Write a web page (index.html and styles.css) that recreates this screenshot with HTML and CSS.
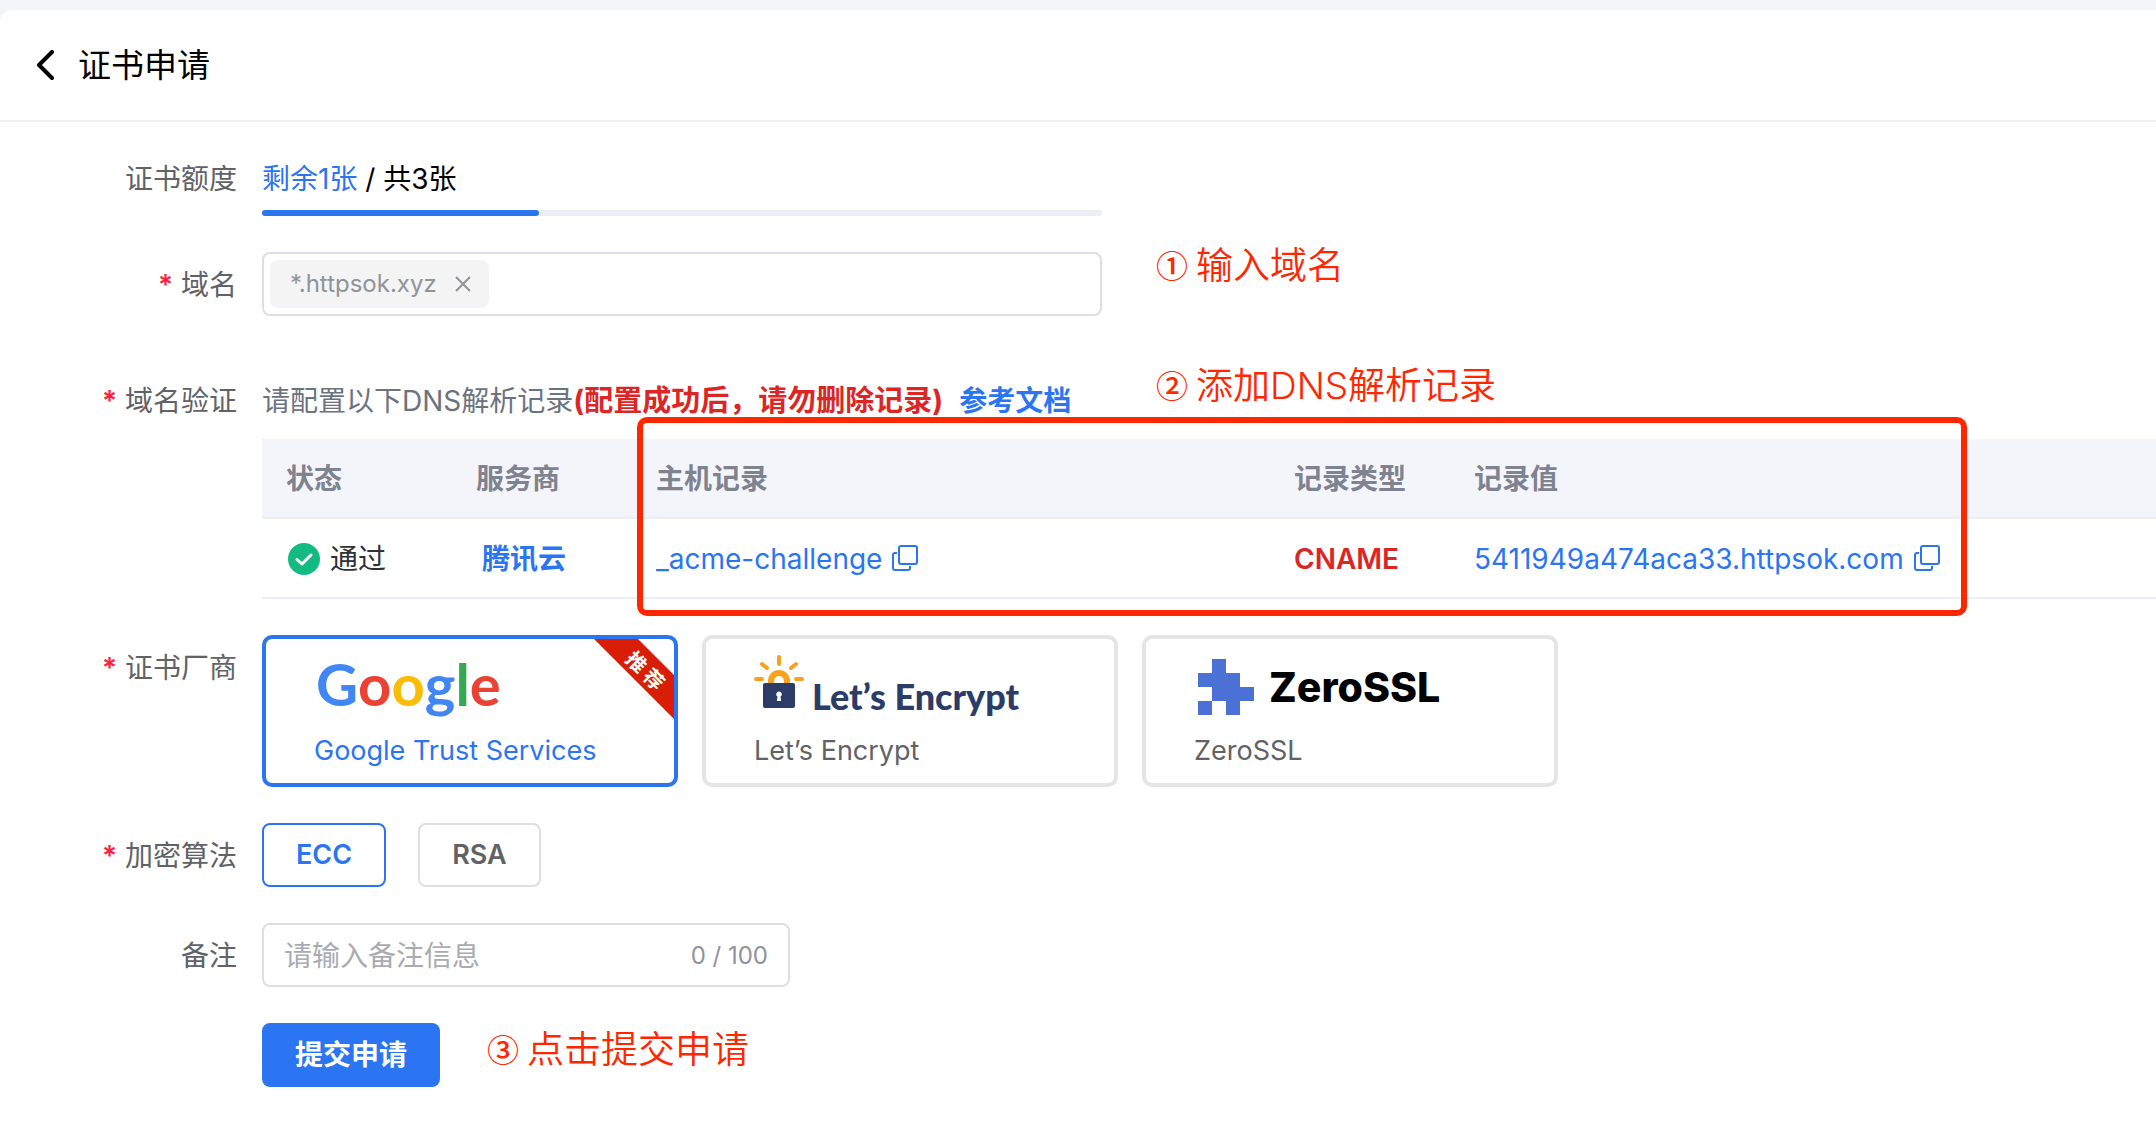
FILE: index.html
```html
<!DOCTYPE html>
<html lang="zh-CN">
<head>
<meta charset="utf-8">
<meta name="viewport" content="width=device-width, initial-scale=1">
<title>证书申请</title>
<link rel="stylesheet" href="styles.css">
</head>
<body>
<svg class="sprite" aria-hidden="true">
  <symbol id="copy" viewBox="0 0 26 28">
    <rect x="7" y="1" width="18" height="18" rx="2"/>
    <path d="M5 8H3a2 2 0 0 0-2 2v13a2 2 0 0 0 2 2h13a2 2 0 0 0 2-2v-2"/>
  </symbol>
</svg>
<main class="panel">
  <header class="page-head">
    <button class="back" type="button" aria-label="返回">
      <svg width="18" height="30" viewBox="0 0 18 30"><path d="M16 2 3 15l13 13"/></svg>
    </button>
    <h1>证书申请</h1>
  </header>

  <form class="form">
    <div class="row">
      <span class="label">证书额度</span>
      <div class="field medium">
        <p class="quota"><span class="primary">剩余1张</span> / 共3张</p>
        <div class="bar"><div class="bar-fill" style="width:33%"></div></div>
      </div>
    </div>

    <div class="row">
      <label class="label required" for="domain">域名</label>
      <div class="field medium box">
        <span class="tag">*.httpsok.xyz
          <button type="button" aria-label="移除"><svg width="16" height="16" viewBox="0 0 16 16"><path d="M1 1l14 14M15 1 1 15"/></svg></button>
        </span>
        <input id="domain" type="text">
      </div>
      <p class="note note-domain"><span>①</span>输入域名</p>
    </div>

    <div class="row row-dns">
      <span class="label required">域名验证</span>
      <div class="field">
        <p class="hint">请配置以下DNS解析记录<strong>(配置成功后，请勿删除记录)</strong><a href="#">参考文档</a></p>
        <table class="records">
          <colgroup><col class="c-state"><col class="c-vendor"><col class="c-host"><col class="c-type"><col></colgroup>
          <thead>
            <tr><th>状态</th><th>服务商</th><th>主机记录</th><th>记录类型</th><th>记录值</th></tr>
          </thead>
          <tbody>
            <tr>
              <td><span class="cell state"><svg width="32" height="32" viewBox="0 0 32 32"><circle cx="16" cy="16" r="16"/><path d="m9 16.500 5 4.500 9-9"/></svg>通过</span></td>
              <td><a class="vendor" href="#">腾讯云</a></td>
              <td><span class="cell primary">_acme-challenge<button class="copy" type="button" aria-label="复制"><svg width="26" height="28"><use href="#copy"/></svg></button></span></td>
              <td><b>CNAME</b></td>
              <td><span class="cell primary">5411949a474aca33.httpsok.com<button class="copy" type="button" aria-label="复制"><svg width="26" height="28"><use href="#copy"/></svg></button></span></td>
            </tr>
          </tbody>
        </table>
      </div>
      <p class="note note-dns"><span>②</span>添加DNS解析记录</p>
      <div class="frame"></div>
    </div>

    <div class="row">
      <span class="label required">证书厂商</span>
      <div class="field cards">
        <button class="card active" type="button" aria-pressed="true">
          <span class="logo google"><i>G</i><i class="red">o</i><i class="yellow">o</i><i>g</i><i class="green">l</i><i class="red">e</i></span>
          <span class="name">Google Trust Services</span>
          <svg class="ribbon" width="80" height="80" viewBox="0 0 80 80">
            <path d="M0 0h44l36 36v44z"/>
            <text x="52" y="31" transform="rotate(45 52 31)" text-anchor="middle" dominant-baseline="central">推 荐</text>
          </svg>
        </button>
        <button class="card" type="button" aria-pressed="false">
          <span class="logo encrypt">
            <svg width="50" height="54" viewBox="0 0 50 54">
              <path class="rays" d="M25 2v7M8 9l5 4M42 9l-5 4M2 24h6M42 24h6"/>
              <path class="shackle" d="M17 30v-4a8 8 0 0 1 16 0v4"/>
              <rect x="9" y="28" width="32" height="25" rx="2"/>
              <path class="hole" d="M25 36.500a2.800 2.800 0 0 0-1.500 5.200L22.800 46h4.400l-.7-4.300A2.800 2.800 0 0 0 25 36.500z"/>
            </svg>
            <span>Let’s Encrypt</span>
          </span>
          <span class="name">Let’s Encrypt</span>
        </button>
        <button class="card" type="button" aria-pressed="false">
          <span class="logo zero">
            <svg width="56" height="56" viewBox="0 0 56 56"><path d="M14 0h14v14h14v14h14v14H42v14H28V42H14v14H0V42h14V28H0V14h14z"/></svg>
            <span>ZeroSSL</span>
          </span>
          <span class="name">ZeroSSL</span>
        </button>
      </div>
    </div>

    <div class="row">
      <span class="label required">加密算法</span>
      <div class="field options">
        <button class="option active" type="button" aria-pressed="true">ECC</button>
        <button class="option" type="button" aria-pressed="false">RSA</button>
      </div>
    </div>

    <div class="row">
      <label class="label" for="remark">备注</label>
      <div class="field small box">
        <input id="remark" type="text" maxlength="100" placeholder="请输入备注信息">
        <span class="count">0 / 100</span>
      </div>
    </div>

    <div class="row">
      <span class="label"></span>
      <div class="field"><button class="submit" type="button">提交申请</button></div>
      <p class="note note-submit"><span>③</span>点击提交申请</p>
    </div>
  </form>
</main>
</body>
</html>
```
FILE: styles.css
```css
:root {
  --primary: #2b75f2;
  --danger: #dc2626;
  --mark: #ff2600;
  --line: #dcdfe6;
  --text: #606266;
  --muted: #909399;
}

* { box-sizing: border-box; }

body {
  margin: 0;
  padding-top: 10px;
  background: #f4f5fa;
  color: var(--text);
  font: 28px/64px Inter, "Noto Sans CJK SC", sans-serif;
  overflow-x: hidden;
}

p, h1 { margin: 0; }
a { color: var(--primary); text-decoration: none; }
svg { display: block; flex: none; }

button {
  margin: 0;
  padding: 0;
  border: 0;
  background: none;
  color: inherit;
  font: inherit;
  cursor: pointer;
}

.sprite { position: absolute; width: 0; height: 0; }
.primary { color: var(--primary); }

.panel {
  min-height: calc(100vh - 10px);
  background: #fff;
  border-radius: 12px 0 0 0;
}

.page-head {
  display: flex;
  align-items: center;
  gap: 24px;
  height: 112px;
  padding-left: 36px;
  border-bottom: 2px solid #f0f1f6;
  color: #000;
}
.page-head h1 { font-size: 33px; font-weight: 400; }
.back path { fill: none; stroke: currentColor; stroke-width: 4; stroke-linecap: round; stroke-linejoin: round; }

.form {
  display: flex;
  flex-direction: column;
  gap: 36px;
  padding: 24px 0 48px;
}

.row { position: relative; display: flex; }
.row-dns { padding-top: 16px; }

.label {
  flex: none;
  width: 237px;
  height: 64px;
  margin-right: 25px;
  line-height: 66px;
  text-align: right;
}
.required::before { content: "*"; margin-right: 8px; color: #ff1f40; font-weight: 600; }

.field { flex: 1; min-width: 0; }
.medium { flex: 0 1 840px; }
.small { flex: 0 1 528px; }

.quota { height: 64px; color: #000; line-height: 66px; }
.bar { height: 6px; border-radius: 3px; background: #ebeef5; }
.bar-fill { height: 100%; border-radius: 3px; background: var(--primary); }

.box {
  display: flex;
  align-items: center;
  height: 64px;
  border: 2px solid var(--line);
  border-radius: 8px;
}
.box input {
  flex: 1;
  min-width: 0;
  height: 100%;
  padding: 2px 0 0 20px;
  border: 0;
  outline: 0;
  background: none;
  color: var(--text);
  font: inherit;
}
.box input::placeholder { color: #a8abb2; opacity: 1; }
.count { padding: 2px 20px 0 0; color: var(--muted); font-size: 24px; }

.tag {
  display: flex;
  align-items: center;
  gap: 18px;
  height: 48px;
  margin-left: 6px;
  padding: 0 18px 0 20px;
  border-radius: 8px;
  background: #f4f4f4;
  color: var(--muted);
  font-size: 24px;
}
.tag path { fill: none; stroke: currentColor; stroke-width: 2; }

.hint { height: 64px; margin-bottom: 7px; color: #6b7280; line-height: 66px; }
.hint strong { color: var(--danger); font-size: 29px; font-weight: 700; }
.hint a { margin-left: 16px; font-weight: 600; }

.records {
  width: 100%;
  table-layout: fixed;
  border-spacing: 0;
}
.records th, .records td {
  height: 80px;
  padding: 2px 24px 0;
  border-bottom: 2px solid #ebeef5;
  text-align: left;
  line-height: 32px;
  white-space: nowrap;
}
.records th { background: #f4f5fa; color: #7f828f; font-weight: 600; }
.records b { color: var(--danger); font-weight: 600; }
.c-state { width: 190px; }
.c-vendor { width: 180px; }
.c-host { width: 638px; }
.c-type { width: 180px; }
.cell { display: flex; align-items: center; gap: 10px; }
.state { padding-left: 2px; color: #303133; }
.state circle { fill: #13bb82; }
.state path { fill: none; stroke: #fff; stroke-width: 3; stroke-linecap: round; stroke-linejoin: round; }
.vendor { padding-left: 6px; font-weight: 600; }
.copy svg { fill: none; stroke: currentColor; stroke-width: 2; }

.cards { display: flex; gap: 24px; }
.card {
  position: relative;
  display: flex;
  flex-direction: column;
  flex: 0 1 416px;
  height: 152px;
  padding: 16px 0 0 48px;
  border: 4px solid #e4e5e7;
  border-radius: 10px;
  text-align: left;
  white-space: nowrap;
}
.card.active { border-color: var(--primary); color: var(--primary); }
.name { font-size: 27px; line-height: 48px; }
.logo { display: flex; height: 72px; }
.google { padding-left: 2px; font: 700 58px/58px Lato, sans-serif; color: #4285f4; }
.google i { font-style: normal; }
.google .red { color: #ea4335; }
.google .yellow { color: #fbbc05; }
.google .green { color: #34a853; }
.encrypt { gap: 8px; color: #2c3c69; font: 900 36px/82px Lato, sans-serif; }
.encrypt rect { fill: #2c3c69; }
.encrypt .rays { fill: none; stroke: #f9a11d; stroke-width: 4; stroke-linecap: round; }
.encrypt .shackle { fill: none; stroke: #f9a11d; stroke-width: 6; }
.encrypt .hole { fill: #fff; }
.zero { gap: 15px; padding: 4px 0 0 4px; color: #000; font: 800 41px/56px Inter, sans-serif; }
.zero path { fill: #4b70d6; }

.ribbon { position: absolute; top: 0; right: 0; }
.ribbon path { fill: #d81e06; }
.ribbon text { fill: #fff; font: 700 20px "Noto Sans CJK SC", sans-serif; }

.options { display: flex; gap: 32px; }
.option {
  height: 64px;
  padding: 0 32px;
  border: 2px solid var(--line);
  border-radius: 8px;
  font-size: 27px;
  font-weight: 600;
  line-height: 60px;
}
.option.active { border-color: var(--primary); color: var(--primary); }

.submit {
  height: 64px;
  padding: 0 33px;
  border-radius: 8px;
  background: var(--primary);
  color: #fff;
  font-weight: 600;
}

.note {
  position: absolute;
  display: flex;
  align-items: center;
  gap: 8px;
  color: var(--mark);
  font-size: 37px;
  font-weight: 350;
  line-height: 48px;
  white-space: nowrap;
}
.note span { height: 48px; font: 500 32px/44px "Noto Sans CJK SC", sans-serif; }
.note-domain { left: 1156px; top: -10px; }
.note-dns { left: 1156px; top: 10px; }
.note-submit { left: 487px; top: 3px; }

.frame {
  position: absolute;
  top: 65px;
  left: 637px;
  width: 1330px;
  height: 199px;
  border: 6px solid var(--mark);
  border-radius: 10px;
  pointer-events: none;
}
```
